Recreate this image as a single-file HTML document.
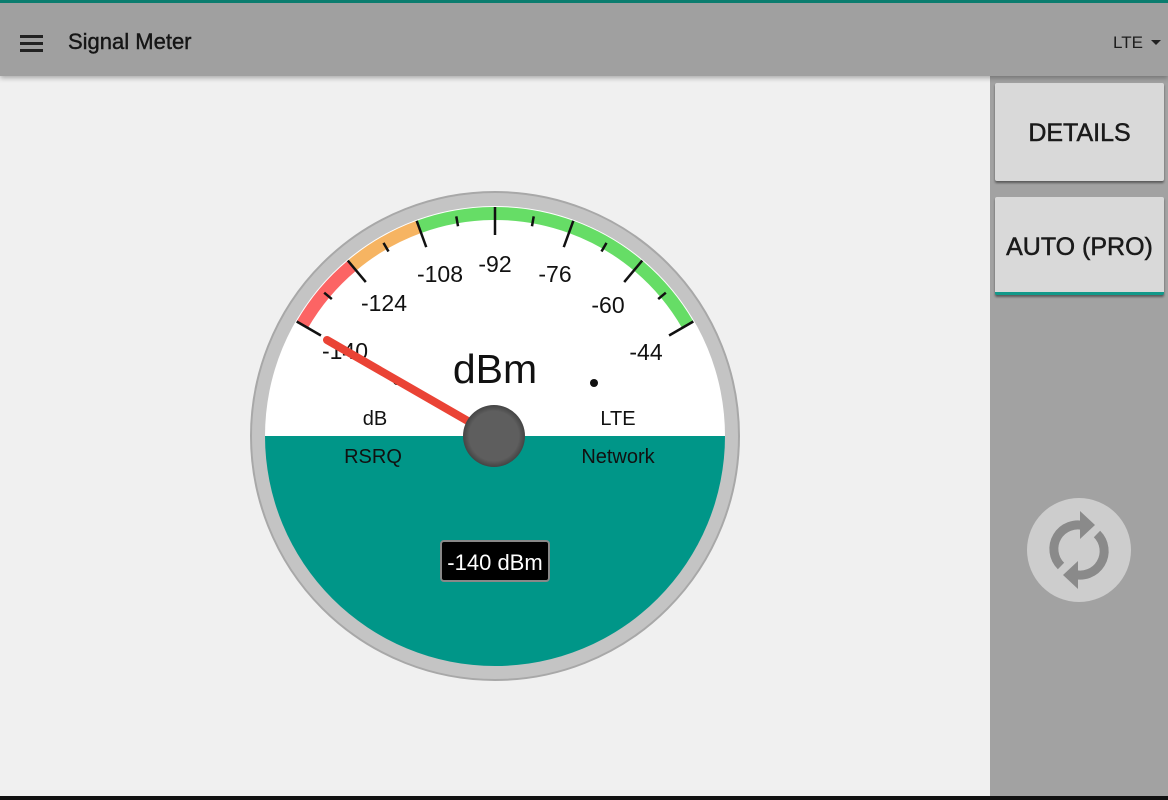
<!DOCTYPE html>
<html><head><meta charset="utf-8"><style>
*{margin:0;padding:0;box-sizing:border-box}
body{width:1168px;height:800px;overflow:hidden;background:#f0f0f0;font-family:"Liberation Sans",Roboto,sans-serif;position:relative}
.top{position:absolute;left:0;top:0;width:1168px;height:76px;background:#a0a0a0;border-top:3px solid #0b7d6f;box-shadow:0 2px 5px rgba(0,0,0,.3);z-index:2}
.title{position:absolute;left:68px;top:26px;font-size:22px;color:#151515;-webkit-text-stroke:0.4px #151515}
.menu{position:absolute;left:20px;top:32px;width:23px}
.menu div{height:2.5px;background:#222;margin-bottom:4.5px}
.lte{position:absolute;left:1113px;top:30px;font-size:17px;color:#1c1c1c}
.tri{position:absolute;left:1151px;top:37px;border-left:5px solid transparent;border-right:5px solid transparent;border-top:5px solid #222}
.side{position:absolute;left:990px;top:76px;width:178px;height:724px;background:#a2a2a2}
.btn{position:absolute;left:995px;width:169px;height:98px;background:#d9d9d9;border-radius:2px;box-shadow:0 2px 2px rgba(0,0,0,.45);font-size:25px;color:#1a1a1a;text-align:center;line-height:100px;-webkit-text-stroke:0.5px #1a1a1a}
.bottom{position:absolute;left:0;top:796px;width:1168px;height:4px;background:#111}
</style></head><body>
<div class="top">
<div class="menu"><div></div><div></div><div></div></div>
<div class="title">Signal Meter</div>
<div class="lte">LTE</div><div class="tri"></div>
</div>
<div class="side"></div>
<div class="btn" style="top:83px">DETAILS</div>
<div class="btn" style="top:197px;border-bottom:3px solid #13998a">AUTO (PRO)</div>
<svg style="position:absolute;left:0;top:0" width="1168" height="800">
<defs>
<radialGradient id="hub" cx="50%" cy="50%" r="50%"><stop offset="80%" stop-color="#5e5e5e"/><stop offset="100%" stop-color="#444"/></radialGradient>
<clipPath id="inner"><circle cx="495" cy="436" r="230"/></clipPath>
</defs>
<circle cx="1079" cy="550" r="52" fill="#cdcdcd"/>
<g fill="none" stroke="#8a8a8a" stroke-width="9">
<path d="M1061 566 A24 24 0 0 1 1085 526"/>
<path d="M1097 534 A24 24 0 0 1 1073 574"/>
</g>
<path d="M1080 511 L1095 525 L1080 539 Z" fill="#8a8a8a"/>
<path d="M1078 561 L1063 575 L1078 589 Z" fill="#8a8a8a"/>
<circle cx="495" cy="436" r="244" fill="#c4c4c4" stroke="#a8a8a8" stroke-width="2"/>
<g clip-path="url(#inner)">
<rect x="240" y="190" width="510" height="246" fill="#fff"/>
<rect x="240" y="436" width="510" height="260" fill="#009688"/>
</g>
<g transform="translate(495,436)" fill="none" stroke-width="13">
<path d="M-192.7 -111.25 A222.5 222.5 0 0 1 -143 -170.4" stroke="#fc6464"/>
<path d="M-143 -170.4 A222.5 222.5 0 0 1 -76.1 -209.1" stroke="#f6b462"/>
<path d="M-76.1 -209.1 A222.5 222.5 0 0 1 192.7 -111.25" stroke="#66dd66"/>
<g stroke="#111" stroke-width="2.5">
<line x1="0" y1="-229" x2="0" y2="-201" transform="rotate(-60)"/>
<line x1="0" y1="-229" x2="0" y2="-201" transform="rotate(-40)"/>
<line x1="0" y1="-229" x2="0" y2="-201" transform="rotate(-20)"/>
<line x1="0" y1="-229" x2="0" y2="-201" transform="rotate(0)"/>
<line x1="0" y1="-229" x2="0" y2="-201" transform="rotate(20)"/>
<line x1="0" y1="-229" x2="0" y2="-201" transform="rotate(40)"/>
<line x1="0" y1="-229" x2="0" y2="-201" transform="rotate(60)"/>
<line x1="0" y1="-223" x2="0" y2="-213" transform="rotate(-50)"/>
<line x1="0" y1="-223" x2="0" y2="-213" transform="rotate(-30)"/>
<line x1="0" y1="-223" x2="0" y2="-213" transform="rotate(-10)"/>
<line x1="0" y1="-223" x2="0" y2="-213" transform="rotate(10)"/>
<line x1="0" y1="-223" x2="0" y2="-213" transform="rotate(30)"/>
<line x1="0" y1="-223" x2="0" y2="-213" transform="rotate(50)"/>
</g>
</g>
<g font-family="Liberation Sans, sans-serif" font-size="23" fill="#111" text-anchor="middle">
<text x="345" y="359">-140</text>
<text x="384" y="311">-124</text>
<text x="440" y="282">-108</text>
<text x="495" y="272">-92</text>
<text x="555" y="282">-76</text>
<text x="608" y="313">-60</text>
<text x="646" y="360">-44</text>
<text x="495" y="383" font-size="41">dBm</text>
<text x="375" y="425" font-size="20">dB</text>
<text x="618" y="425" font-size="20">LTE</text>
</g>
<g font-family="Liberation Sans, sans-serif" font-size="20" fill="#111" text-anchor="middle">
<text x="373" y="463">RSRQ</text>
<text x="618" y="463">Network</text>
</g>
<circle cx="594" cy="383" r="4" fill="#111"/>
<circle cx="397" cy="381" r="4" fill="#111"/>
<line x1="327" y1="340" x2="480" y2="428" stroke="#ea4335" stroke-width="8" stroke-linecap="round"/>
<circle cx="494" cy="436" r="31" fill="url(#hub)"/>
<rect x="441" y="541" width="108" height="40" rx="3" fill="#000" stroke="#888" stroke-width="2"/>
<text x="495" y="570" font-family="Liberation Sans, sans-serif" font-size="22" fill="#fff" text-anchor="middle">-140 dBm</text>
</svg>
<div class="bottom"></div>
</body></html>
